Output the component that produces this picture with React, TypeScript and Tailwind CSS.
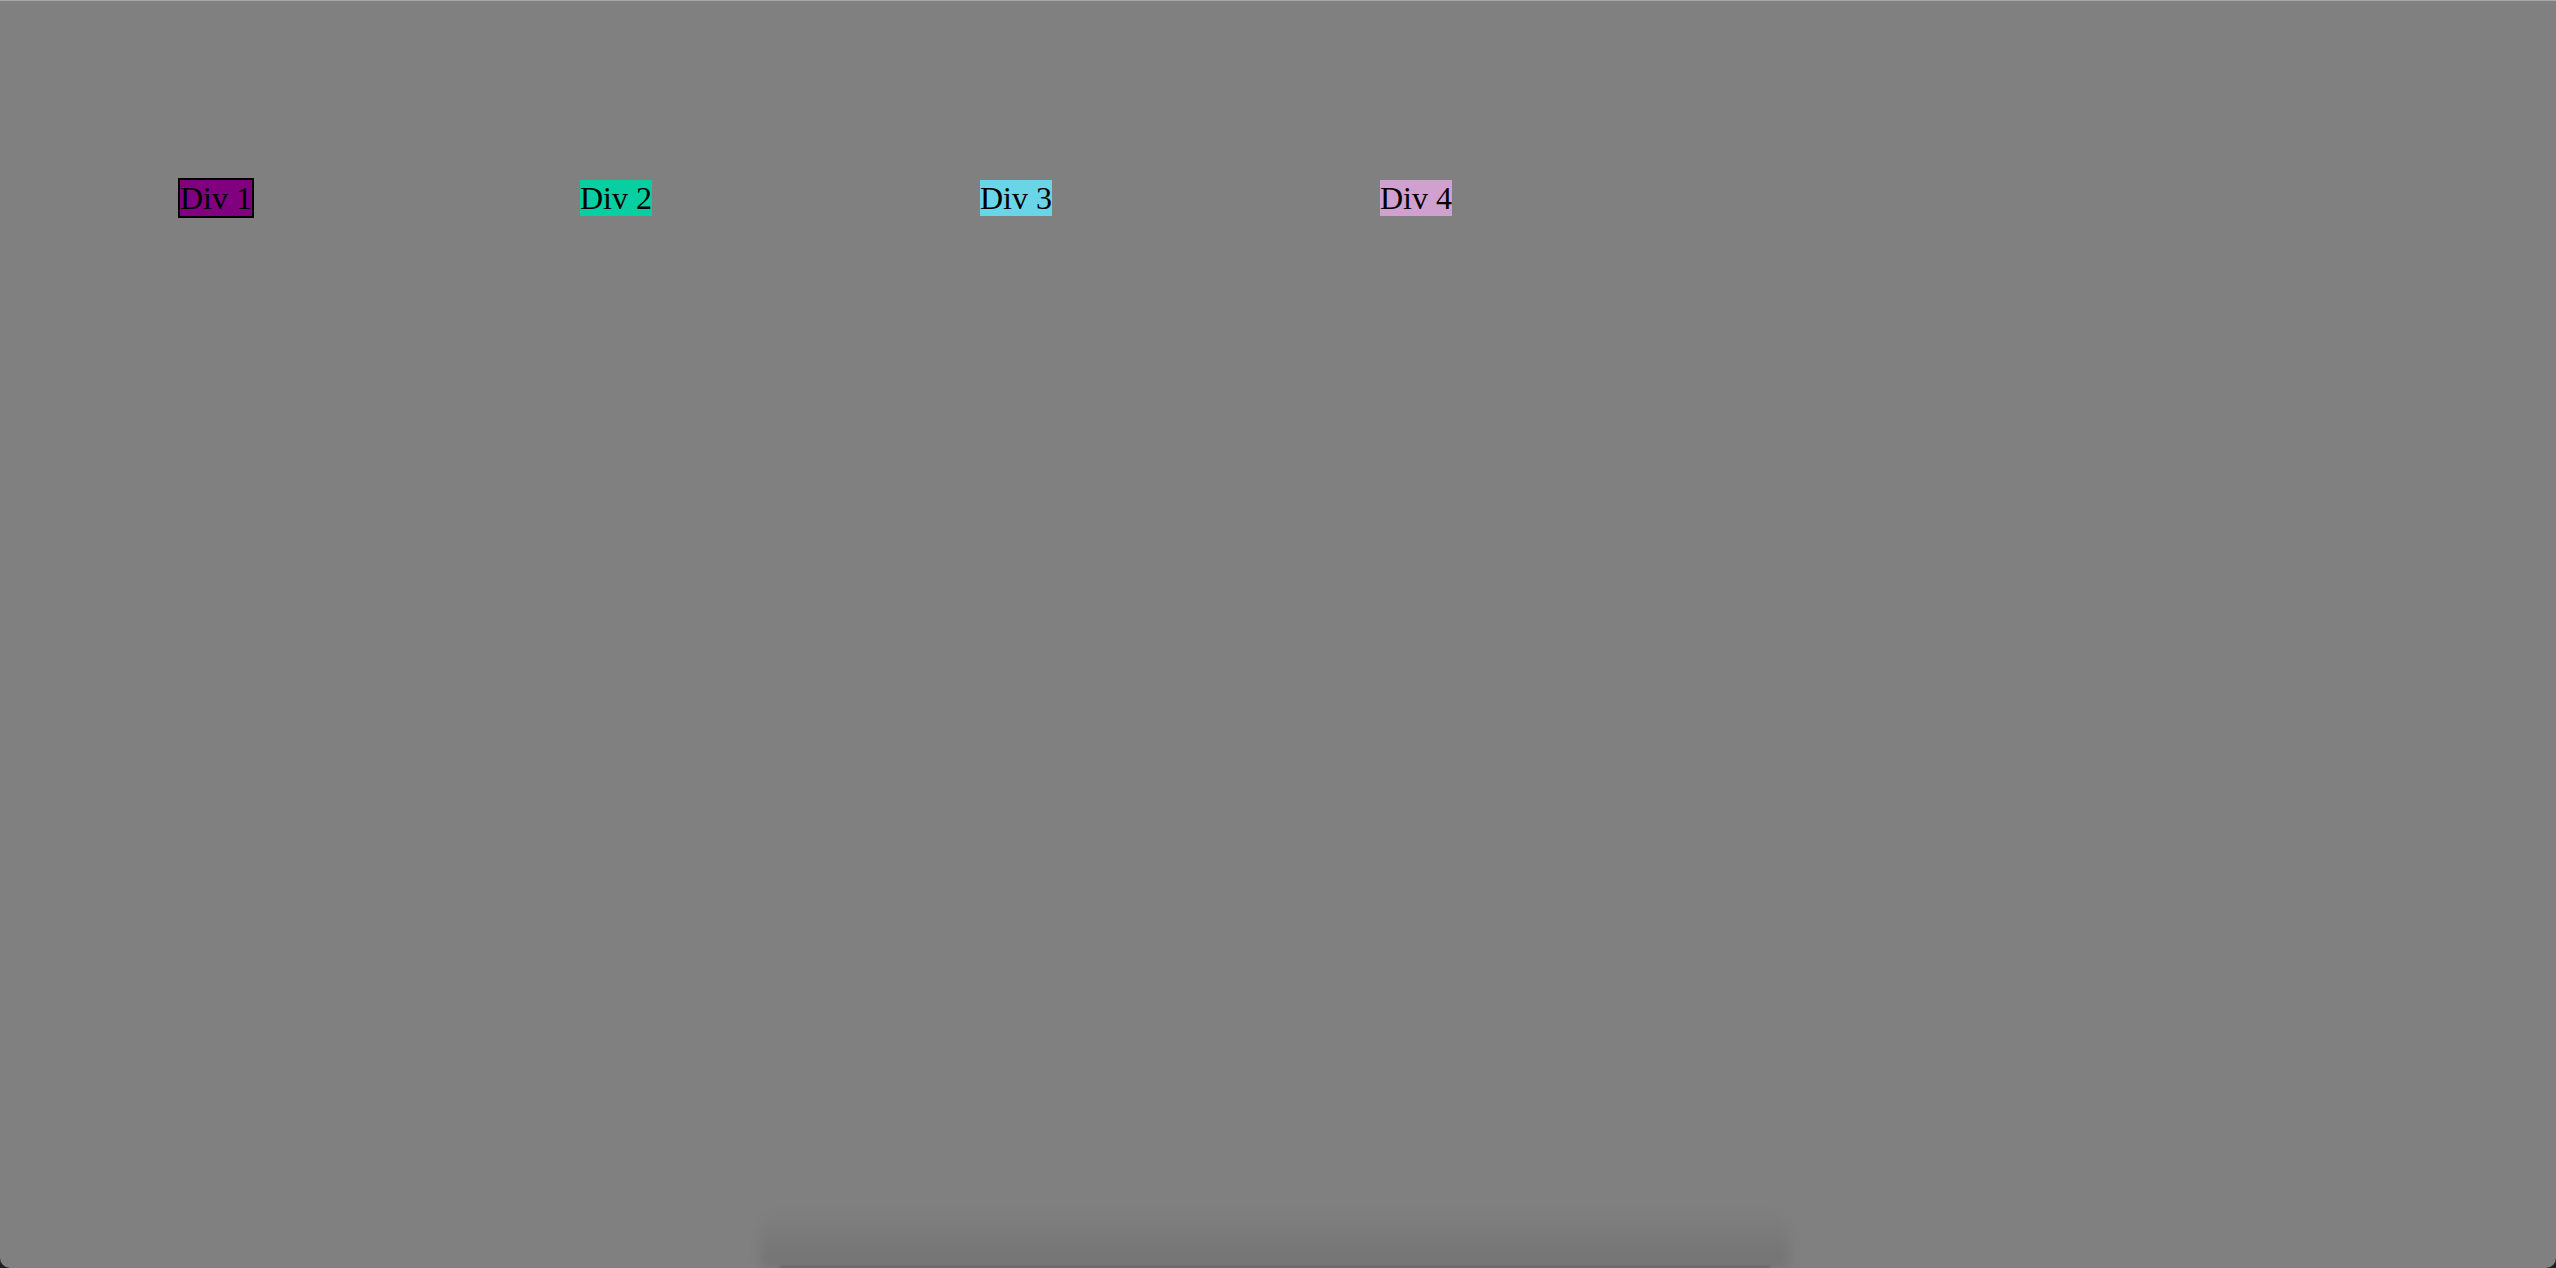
export default function App() {
  const boxes = [
    { label: "Div 1", className: "bg-[#800080] outline-2 outline-black outline-solid" },
    { label: "Div 2", className: "bg-[#07cfa1]" },
    { label: "Div 3", className: "bg-[#6bd5e8]" },
    { label: "Div 4", className: "bg-[#d0a0cf]" },
  ];

  return (
    <div className="h-screen w-full bg-[#1a1f24]">
      <div className="relative h-full w-full overflow-hidden rounded-b-[10px] border-t border-[#a8a8a8] bg-[#808080]">
        {/* the boxes, one per 400px column */}
        <div className="grid grid-cols-[repeat(4,400px)] pl-[180px] pt-[179px]">
          {boxes.map((box) => (
            <div key={box.label} className="justify-self-start">
              <div
                className={`${box.className} text-[32px] leading-[36px] text-black`}
                style={{ fontFamily: '"Liberation Serif", "Times New Roman", serif' }}
              >
                {box.label}
              </div>
            </div>
          ))}
        </div>

        {/* soft shadow near the bottom edge */}
        <div className="pointer-events-none absolute bottom-0 left-[760px] h-[60px] w-[1030px] rounded-t-[30px] bg-gradient-to-b from-transparent to-black/10 blur-[6px]" />
        <div className="pointer-events-none absolute bottom-0 left-[780px] h-[2px] w-[990px] bg-black/20 blur-[1px]" />
      </div>
    </div>
  );
}
